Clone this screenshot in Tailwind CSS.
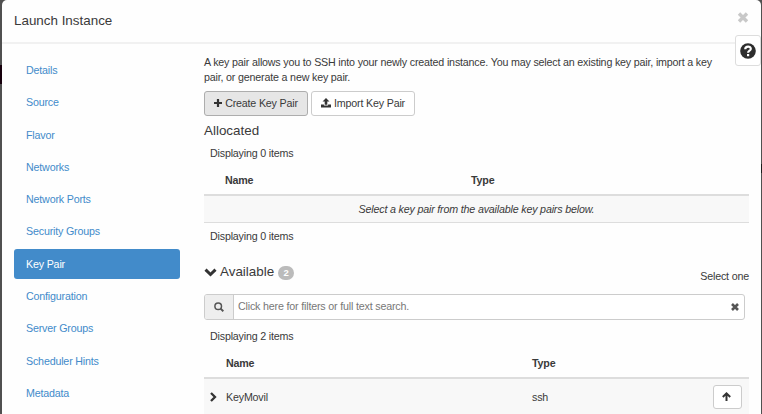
<!DOCTYPE html>
<html lang="en">
<head>
<meta charset="utf-8">
<title>Launch Instance</title>
<script src="https://cdn.jsdelivr.net/npm/@tailwindcss/browser@4"></script>
</head>
<body class="w-[762px] h-[414px] overflow-hidden bg-[#505050] font-['Liberation_Sans',Arial,sans-serif] text-[10.7px] tracking-[-0.18px] leading-[14px] text-[#3a3a3a]">
<div class="absolute left-0 top-[65px] w-[2px] h-[19px] bg-[#16000c]"></div>
<div class="absolute right-0 top-[164px] w-px h-[9px] bg-[#1c1c1c]"></div>
<main class="relative ml-[2px] w-[759px] h-[414px] bg-[#fefefe] rounded-t-[5px] flex flex-col">
  <header class="h-[44px] shrink-0 border-b-2 border-[#f1f1f1] flex justify-between pl-3 pr-[12px]">
    <h1 class="text-[13.4px] tracking-normal leading-[16px] pt-[13px]">Launch Instance</h1>
    <svg class="mt-[12px] w-[12px] h-[11px]" viewBox="0 0 12 11"><path d="M2 1.5L10 9.5M10 1.5L2 9.5" stroke="#c8c8c8" stroke-width="3.4"/></svg>
  </header>
  <div class="flex flex-1 pl-3">
    <nav class="w-[166px] shrink-0 pt-[11px] flex flex-col gap-[2.3px] text-[#428bca]">
      <a class="h-[30px] px-3 flex items-center">Details</a>
      <a class="h-[30px] px-3 flex items-center">Source</a>
      <a class="h-[30px] px-3 flex items-center">Flavor</a>
      <a class="h-[30px] px-3 flex items-center">Networks</a>
      <a class="h-[30px] px-3 flex items-center">Network Ports</a>
      <a class="h-[30px] px-3 flex items-center">Security Groups</a>
      <a class="h-[30px] px-3 flex items-center bg-[#428bca] text-white rounded-[3px]">Key Pair</a>
      <a class="h-[30px] px-3 flex items-center">Configuration</a>
      <a class="h-[30px] px-3 flex items-center">Server Groups</a>
      <a class="h-[30px] px-3 flex items-center">Scheduler Hints</a>
      <a class="h-[30px] px-3 flex items-center">Metadata</a>
    </nav>
    <section class="ml-6 w-[545px] pt-[11px]">
      <p class="whitespace-nowrap leading-[14.5px]">A key pair allows you to SSH into your newly created instance. You may select an existing key pair, import a key<br>pair, or generate a new key pair.</p>
      <div class="flex gap-[3px] mt-[7px]">
        <button class="w-[104px] h-[25px] pb-[2px] rounded-[3px] border border-[#adadad] bg-[#e6e6e6] flex items-center justify-center gap-[3px]">
          <svg class="w-[8px] h-[8px]" viewBox="0 0 8 8"><path d="M4 0V8M0 4H8" stroke="#333" stroke-width="2.2"/></svg>Create Key Pair</button>
        <button class="w-[104px] h-[25px] pb-[2px] rounded-[3px] border border-[#ccc] bg-white flex items-center justify-center gap-[3px]">
          <svg class="w-[10px] h-[10px]" viewBox="0 0 10 10" fill="#333"><path d="M5 0L8.5 3.6H6.3V6.8H3.7V3.6H1.5ZM0 6.4H2.9V7.6H7.1V6.4H10V9.6H0Z"/></svg>Import Key Pair</button>
      </div>
      <h2 class="text-[13.4px] tracking-normal leading-[16px] mt-[7px]">Allocated</h2>
      <p class="pl-[6px] mt-[7px]">Displaying 0 items</p>
      <div class="h-[34px] flex pt-[13px] font-bold"><span class="w-[267px] pl-[21px]">Name</span><span>Type</span></div>
      <div class="h-[29px] border-t-2 border-b border-t-[#ddd] border-b-[#ddd] bg-[#f8f8f8] flex items-center justify-center italic pb-px">Select a key pair from the available key pairs below.</div>
      <p class="pl-[6px] mt-[6px]">Displaying 0 items</p>
      <div class="h-[51px] flex items-start pt-[21px]">
        <svg class="w-[13px] h-[9px] mt-[4px]" viewBox="0 0 13 9"><path d="M1.5 1.7L6.5 6.5L11.5 1.7" fill="none" stroke="#333" stroke-width="3"/></svg>
        <h2 class="text-[13.4px] tracking-normal leading-[16px] ml-[3px]">Available</h2>
        <span class="ml-1 mt-[2px] w-[16px] h-[14px] rounded-full bg-[#bbb] text-white font-bold text-[9.5px] text-center">2</span>
        <span class="ml-auto mt-[5px]">Select one</span>
      </div>
      <div class="w-[541px] h-[26px] border border-[#ccc] rounded-[3px] bg-white flex items-center overflow-hidden">
        <div class="w-[29px] h-full bg-[#eee] border-r border-[#ccc] flex items-center justify-center">
          <svg class="w-[10px] h-[10px]" viewBox="0 0 10 10" fill="none" stroke="#555"><circle cx="4.2" cy="4.2" r="3.3" stroke-width="1.5"/><path d="M6.6 6.6L9.3 9.3" stroke-width="2"/></svg>
        </div>
        <span class="pl-[4px] pb-[2px] text-[#777]">Click here for filters or full text search.</span>
        <svg class="ml-auto mr-[5px] w-[8px] h-[8px]" viewBox="0 0 8 8"><path d="M1 1L7 7M7 1L1 7" stroke="#555" stroke-width="2.6"/></svg>
      </div>
      <p class="pl-[6px] mt-[9px]">Displaying 2 items</p>
      <div class="h-[34px] flex pt-[13px] font-bold"><span class="w-[328px] pl-[22px]">Name</span><span>Type</span></div>
      <div class="h-[37px] border-t-2 border-[#ddd] bg-[#f8f8f8] flex items-center">
        <svg class="ml-[6px] w-[7px] h-[10px]" viewBox="0 0 7 10"><path d="M1 1L5 5L1 9" fill="none" stroke="#333" stroke-width="2.3"/></svg>
        <span class="ml-[9px] w-[306px]">KeyMovil</span><span>ssh</span>
        <button class="ml-auto mr-[7px] w-[29px] h-[24px] rounded-[3px] border border-[#ccc] bg-white flex items-center justify-center">
          <svg class="w-[9px] h-[9px] mr-[2px]" viewBox="0 0 9 9" fill="none" stroke="#333" stroke-width="2"><path d="M4.5 9V1.4M.8 5L4.5 1.4L8.2 5"/></svg></button>
      </div>
    </section>
  </div>
  <button class="absolute left-[733px] top-[35px] w-[26px] h-[31px] border border-[#ddd] rounded-[3px] bg-white flex items-center justify-center">
    <svg class="w-[16px] h-[16px]" viewBox="0 0 16 16"><circle cx="8" cy="8" r="7.8" fill="#2d2d2d"/><path d="M5.2 6.2C5.4 2.7 10.9 2.9 10.8 6C10.7 7.8 8.1 7.7 8.1 9.8" fill="none" stroke="#fff" stroke-width="2.2"/><path d="M7 11H9.2V13.2H7Z" fill="#fff"/></svg>
  </button>
</main>
</body>
</html>
